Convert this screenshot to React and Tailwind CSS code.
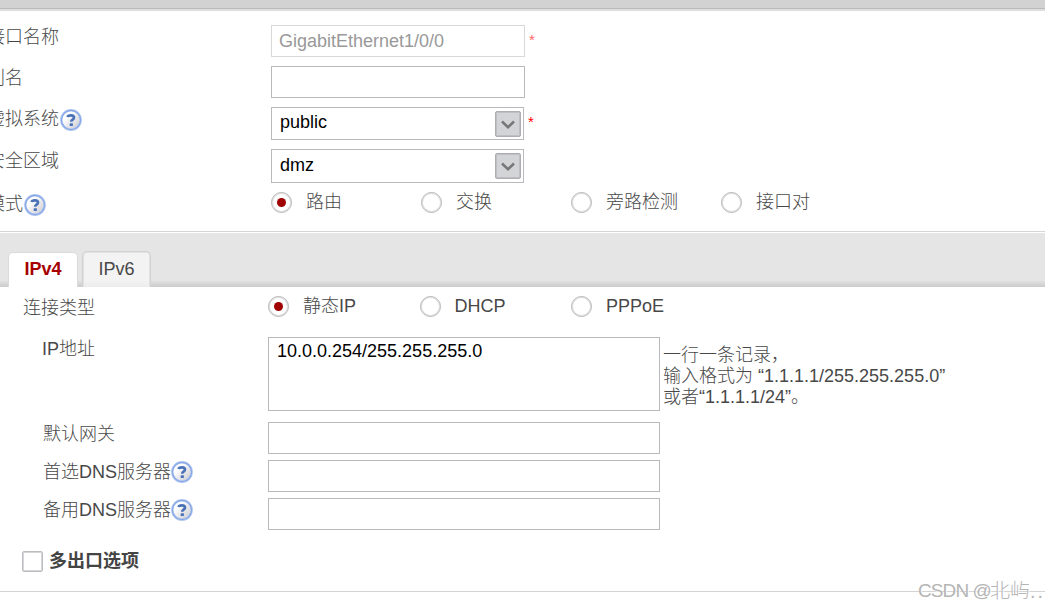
import React, { useState } from 'react';

const HelpIcon = () => (
  <svg className="h-[22px] w-[22px] shrink-0" viewBox="0 0 22 22" fill="none">
    <defs>
      <linearGradient id="help-fill" x1="0" y1="0" x2="1" y2="1">
        <stop offset="0.3" stopColor="#ffffff" />
        <stop offset="1" stopColor="#c6c6cc" />
      </linearGradient>
    </defs>
    <circle cx="11" cy="11" r="9.7" fill="url(#help-fill)" stroke="#b3c9f0" strokeWidth="2.4" />
    <circle cx="11" cy="11" r="9.6" stroke="#86a6e6" strokeWidth="1.1" />
    <path d="M7.6 8C8 5.9 14 5.4 14 8.6C14 10.8 11.2 10.6 11.2 12.8" stroke="#4a72b8" strokeWidth="2.7" />
    <rect x="9.7" y="14.2" width="3.2" height="2.8" rx="0.6" fill="#4a72b8" />
  </svg>
);

const Radio = ({ label, checked, onChange, className }) => (
  <button type="button" role="radio" aria-checked={checked} onClick={onChange} className={`flex shrink-0 items-start ${className}`}>
    <span className="flex h-[21px] w-[21px] items-center justify-center rounded-full border border-[#b5b5b5] bg-white shadow-[inset_0_0_0_1px_#dedede]">
      {checked && <span className="h-[9px] w-[9px] rounded-full bg-[#a00000]" />}
    </span>
    <span className="ml-3.5 leading-[20px] whitespace-nowrap">{label}</span>
  </button>
);

const Select = ({ value, className, textClass }) => (
  <div className={`flex w-[253px] items-start justify-between border border-[#b9b9be] bg-white pl-2 pr-0.5 pt-[3px] text-black ${className}`}>
    <span className={textClass}>{value}</span>
    <span className="flex h-[26px] w-[26px] items-center justify-center rounded-[2px] border border-[#adadb2] bg-[#d3d4d5] shadow-[inset_0_0_0_1px_#bfbfc3]">
      <svg className="mt-0.5 h-3 w-4" viewBox="0 0 16 12" fill="none">
        <path d="M2 2.5L8 8.2L14 2.5" stroke="#77777a" strokeWidth="2.5" />
      </svg>
    </span>
  </div>
);

const modes = ['路由', '交换', '旁路检测', '接口对'];
const types = ['静态IP', 'DHCP', 'PPPoE'];
const inputClass = 'h-8 border border-[#b9b9be] bg-white px-2 text-black outline-none';

const App = () => {
  const [mode, setMode] = useState('路由');
  const [type, setType] = useState('静态IP');
  const [tab, setTab] = useState('IPv4');
  const [ip, setIp] = useState('10.0.0.254/255.255.255.0');
  const [multi, setMulti] = useState(false);

  return (
    <div className="relative h-[609px] w-[1045px] overflow-hidden bg-white font-['Liberation_Sans','Noto_Sans_CJK_SC',sans-serif] text-[18px] font-light text-[#484848]">
      {/* Dialog edge */}
      <div className="h-[11px] border-b-2 border-[#dedede] bg-[#d2d2d2]">
        <div className="h-[9px] border-b border-[#bababa]" />
      </div>

      {/* Interface settings */}
      <div className="h-[221px] border-b border-[#d5d5d5] pt-3.5">
        <div className="flex h-[41px] items-start">
          <div className="-ml-[13px] w-[284px] shrink-0 leading-[24px]">接口名称</div>
          <input className="h-8 w-[254px] border border-[#d8d8da] bg-white px-[7px] text-[#999] outline-none" value="GigabitEthernet1/0/0" disabled readOnly />
          <span className="ml-1 mt-[3px] text-[15px] leading-[24px] text-[#ff6666]">*</span>
        </div>
        <div className="flex h-[41px] items-start">
          <div className="-ml-[13px] w-[284px] shrink-0 leading-[24px]">别名</div>
          <input className={`${inputClass} w-[254px]`} />
        </div>
        <div className="flex h-[42px] items-start">
          <div className="-ml-[13px] flex w-[284px] shrink-0 items-start leading-[25px]">
            虚拟系统
            <span className="ml-px mt-0.5"><HelpIcon /></span>
          </div>
          <Select value="public" className="h-[33px]" textClass="leading-[23px]" />
          <span className="ml-1 mt-[3px] text-[15px] leading-[24px] text-[#ff0000]">*</span>
        </div>
        <div className="flex h-[43px] items-start">
          <div className="-ml-[13px] w-[284px] shrink-0 leading-[25px]">安全区域</div>
          <Select value="dmz" className="h-[34px]" textClass="leading-[25px]" />
        </div>
        <div className="flex items-start">
          <div className="-ml-[13px] flex w-[284px] shrink-0 items-start leading-[25px]">
            模式
            <span className="ml-px mt-0.5"><HelpIcon /></span>
          </div>
          {modes.map((m) => (
            <Radio key={m} label={m} checked={mode === m} onChange={() => setMode(m)} className="w-[150px]" />
          ))}
        </div>
      </div>

      {/* Tabs */}
      <div className="mt-px flex h-[54px] items-end bg-[linear-gradient(to_bottom,#e5e5e5_0px,#e5e5e5_47px,#cecece_53px)] pl-2">
        {['IPv4', 'IPv6'].map((t) => (
          <button
            key={t}
            type="button"
            onClick={() => setTab(t)}
            className={
              tab === t
                ? 'mr-1 h-[35px] w-[70px] rounded-t-[5px] border border-b-0 border-[#dadada] bg-white pb-0.5 font-bold text-[#a60000]'
                : 'mr-1 h-[36px] w-[69px] rounded-t-[5px] border border-b-0 border-[#d2d2d2] bg-[linear-gradient(to_bottom,#f3f3f3_80%,#ececec)] pb-px font-normal shadow-[inset_1px_1px_0_#e2e2e2,inset_-1px_0_0_#e2e2e2]'
            }
          >
            {t}
          </button>
        ))}
      </div>

      {/* IPv4 settings */}
      <div className="h-[305px] border-b border-[#d3d3d3] pt-[9px]">
        <div className="flex h-[41px] items-start">
          <div className="w-[268px] shrink-0 pl-[23px] leading-[24px]">连接类型</div>
          {types.map((t) => (
            <Radio key={t} label={t} checked={type === t} onChange={() => setType(t)} className="w-[151.5px]" />
          ))}
        </div>
        <div className="flex h-[85px] items-start">
          <div className="w-[268px] shrink-0 pl-[42px] leading-[24px]">IP地址</div>
          <textarea
            className="h-[74px] w-[392px] resize-none border border-[#b9b9be] bg-white px-2 py-0.5 leading-[22px] text-black outline-none"
            value={ip}
            onChange={(e) => setIp(e.target.value)}
          />
          <div className="ml-[3px] mt-2 leading-[21px] whitespace-nowrap">
            <p>一行一条记录，</p>
            <p>输入格式为 “1.1.1.1/255.255.255.0”</p>
            <p>或者“1.1.1.1/24”。</p>
          </div>
        </div>
        {['默认网关', '首选DNS服务器', '备用DNS服务器'].map((label, i) => (
          <div key={label} className="flex h-[38px] items-start">
            <div className="flex w-[268px] shrink-0 items-start pl-[43px] leading-[24px]">
              {label}
              {i > 0 && <span className="mt-px"><HelpIcon /></span>}
            </div>
            <input className={`${inputClass} w-[392px]`} />
          </div>
        ))}
        <button type="button" role="checkbox" aria-checked={multi} onClick={() => setMulti(!multi)} className="mt-[15px] flex items-start pl-[22px]">
          <span className="flex h-[21px] w-[21px] items-center justify-center rounded-[2px] border border-[#bdbdc1] bg-white shadow-[inset_0_0_0_1px_#d6d6d9]">
            {multi && <span className="h-[9px] w-[9px] bg-[#a00000]" />}
          </span>
          <span className="ml-1.5 leading-[21px] font-bold text-[#444]">多出口选项</span>
        </button>
      </div>

      <div className="absolute left-[918px] top-[579px] flex text-[20px] leading-[24px] whitespace-nowrap text-[#b5b5b5] [text-shadow:1px_1px_0_#fff]">
        <span className="w-[72px] shrink-0 text-[19px] tracking-[-0.9px] whitespace-pre">CSDN @</span>
        <span>北屿</span>
        <span className="tracking-[2px]">..</span>
      </div>
    </div>
  );
};

export default App;
